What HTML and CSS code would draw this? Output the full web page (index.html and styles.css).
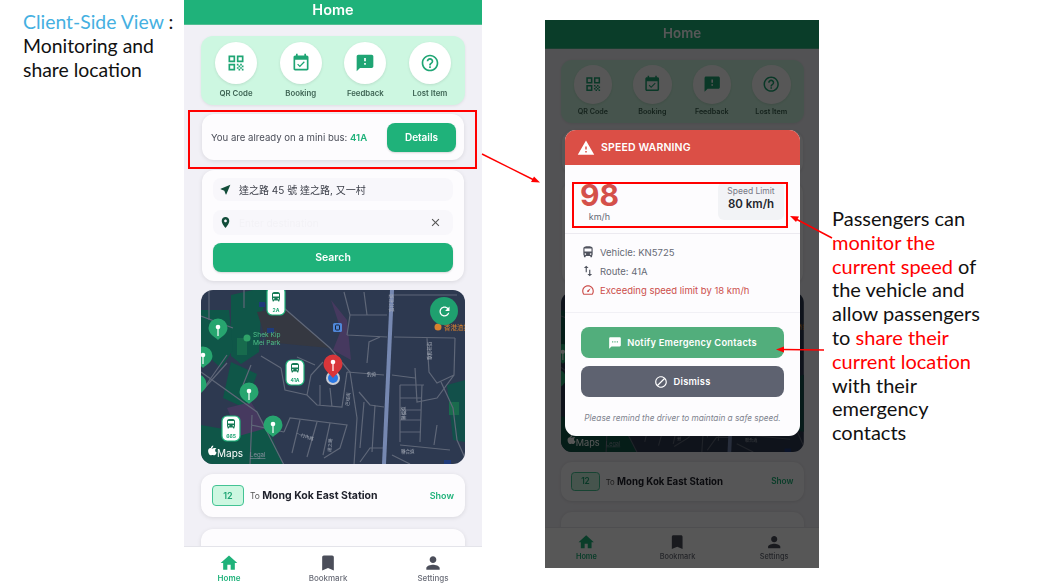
FILE: index.html
```html
<!DOCTYPE html>
<html lang="en">
<head>
  <meta charset="UTF-8" />
  <title>Client-Side View</title>
  <link rel="stylesheet" href="styles.css">
</head>
<body>

  <svg class="sprite" xmlns="http://www.w3.org/2000/svg">
    <symbol id="i-event" viewBox="0 0 24 24"><path d="M16.53 11.06L15.47 10l-4.88 4.88-2.12-2.12-1.06 1.06L10.59 17l5.94-5.94zM19 3h-1V1h-2v2H8V1H6v2H5c-1.11 0-1.99.9-1.99 2L3 19c0 1.1.89 2 2 2h14c1.1 0 2-.9 2-2V5c0-1.1-.9-2-2-2zm0 16H5V8h14v11z"/></symbol>
    <symbol id="i-qr" viewBox="0 0 24 24"><path d="M3 3h8v8H3V3zm2 2v4h4V5H5zm8-2h8v8h-8V3zm2 2v4h4V5h-4zM3 13h8v8H3v-8zm2 2v4h4v-4H5z"/><path d="M13 13h2v2h-2zM17 13h2v2h-2zM15 15h2v2h-2zM19 15h2v2h-2zM13 17h2v2h-2zM17 17h2v2h-2zM15 19h2v2h-2zM19 19h2v2h-2z"/></symbol>
    <symbol id="i-feedback" viewBox="0 0 24 24"><path d="M20 2H4c-1.1 0-1.99.9-1.99 2L2 22l4-4h14c1.1 0 2-.9 2-2V4c0-1.1-.9-2-2-2zm-7 12h-2v-2h2v2zm0-4h-2V6h2v4z"/></symbol>
    <symbol id="i-help" viewBox="0 0 24 24"><path d="M11 18h2v-2h-2v2zm1-16C6.48 2 2 6.48 2 12s4.48 10 10 10 10-4.48 10-10S17.52 2 12 2zm0 18c-4.41 0-8-3.59-8-8s3.59-8 8-8 8 3.59 8 8-3.59 8-8 8zm0-14c-2.21 0-4 1.79-4 4h2c0-1.1.9-2 2-2s2 .9 2 2c0 2-3 1.75-3 5h2c0-2.25 3-2.5 3-5 0-2.21-1.79-4-4-4z"/></symbol>
    <symbol id="i-near" viewBox="0 0 24 24"><path d="M21 3L3 10.53v.98l6.84 2.65L12.48 21h.98L21 3z"/></symbol>
    <symbol id="i-place" viewBox="0 0 24 24"><path d="M12 2C8.13 2 5 5.13 5 9c0 5.25 7 13 7 13s7-7.75 7-13c0-3.87-3.13-7-7-7zm0 9.5c-1.38 0-2.5-1.12-2.5-2.5s1.12-2.5 2.5-2.5 2.5 1.12 2.5 2.5-1.12 2.5-2.5 2.5z"/></symbol>
    <symbol id="i-close" viewBox="0 0 24 24"><path d="M19 6.41L17.59 5 12 10.59 6.41 5 5 6.41 10.59 12 5 17.59 6.41 19 12 13.41 17.59 19 19 17.59 13.41 12z"/></symbol>
    <symbol id="i-home" viewBox="0 0 24 24"><path d="M10 20v-6h4v6h5v-8h3L12 3 2 12h3v8z"/></symbol>
    <symbol id="i-bookmark" viewBox="0 0 24 24"><path d="M17 3H7c-1.1 0-1.99.9-1.99 2L5 21l7-3 7 3V5c0-1.1-.9-2-2-2z"/></symbol>
    <symbol id="i-person" viewBox="0 0 24 24"><path d="M12 12c2.21 0 4-1.79 4-4s-1.79-4-4-4-4 1.79-4 4 1.79 4 4 4zm0 2c-2.67 0-8 1.34-8 4v2h16v-2c0-2.66-5.33-4-8-4z"/></symbol>
    <symbol id="i-refresh" viewBox="0 0 24 24"><path d="M17.65 6.35C16.2 4.9 14.21 4 12 4c-4.42 0-7.99 3.58-7.99 8s3.57 8 7.99 8c3.73 0 6.84-2.55 7.73-6h-2.08c-.82 2.33-3.04 4-5.65 4-3.31 0-6-2.69-6-6s2.69-6 6-6c1.66 0 3.14.69 4.22 1.78L13 11h7V4l-2.35 2.35z"/></symbol>
    <symbol id="i-warning" viewBox="0 0 24 24"><path d="M1 21h22L12 2 1 21zm12-3h-2v-2h2v2zm0-4h-2v-4h2v4z"/></symbol>
    <symbol id="i-bus" viewBox="0 0 24 24"><path d="M4 16c0 .88.39 1.67 1 2.22V20c0 .55.45 1 1 1h1c.55 0 1-.45 1-1v-1h8v1c0 .55.45 1 1 1h1c.55 0 1-.45 1-1v-1.78c.61-.55 1-1.34 1-2.22V6c0-3.5-3.58-4-8-4s-8 .5-8 4v10zm3.5 1c-.83 0-1.5-.67-1.5-1.5S6.67 14 7.5 14s1.5.67 1.5 1.5S8.33 17 7.5 17zm9 0c-.83 0-1.5-.67-1.5-1.5s.67-1.5 1.5-1.5 1.5.67 1.5 1.5-.67 1.5-1.5 1.5zm1.5-6H6V6h12v5z"/></symbol>
    <symbol id="i-swap" viewBox="0 0 24 24"><path d="M16 17.01V10h-2v7.01h-3L15 21l4-3.99h-3zM9 3L5 6.99h3V14h2V6.99h3L9 3z"/></symbol>
    <symbol id="i-gauge" viewBox="0 0 24 24"><path d="M12 4C6.5 4 2 8.5 2 14c0 2.2.7 4.2 1.9 5.9.2.3.5.4.8.4h14.6c.3 0 .6-.1.8-.4C21.3 18.200 22 16.200 22 14c0-5.500-4.500-10-10-10zm6.800 14.300H5.200C4.400 17.100 4 15.600 4 14c0-4.400 3.600-8 8-8s8 3.600 8 8c0 1.600-.4 3.100-1.200 4.300z"/><path d="M16.500 9.200l-4.900 3.300c-.9.300-1.400 1.200-1.100 2 .3.900 1.200 1.300 2 1.100.5-.2.900-.6 1.100-1.100l2.900-5.300z"/></symbol>
    <symbol id="i-sms" viewBox="0 0 24 24"><path d="M20 2H4c-1.100 0-1.990.9-1.990 2L2 22l4-4h14c1.100 0 2-.9 2-2V4c0-1.100-.9-2-2-2zM9 11H7V9h2v2zm4 0h-2V9h2v2zm4 0h-2V9h2v2z"/></symbol>
    <symbol id="i-block" viewBox="0 0 24 24"><path d="M12 2C6.480 2 2 6.480 2 12s4.480 10 10 10 10-4.480 10-10S17.520 2 12 2zM4 12c0-4.420 3.580-8 8-8 1.850 0 3.550.63 4.900 1.690L5.690 16.900C4.630 15.550 4 13.850 4 12zm8 8c-1.850 0-3.550-.63-4.900-1.690L18.310 7.100C19.370 8.450 20 10.150 20 12c0 4.420-3.580 8-8 8z"/></symbol>

    <g id="pin-green">
      <path d="M0 9 C-3 6 -9.500 3 -9.500 -3 A9.500 9.500 0 0 1 9.500 -3 C9.500 3 3 6 0 9z" fill="#27a56f"/>
      <circle cx="0" cy="-4" r="2.300" fill="#fff"/>
      <rect x="-.6" y="-4" width="1.200" height="9" fill="#fff"/>
    </g>

    <symbol id="map-art" viewBox="0 0 264 174">
      <rect width="264" height="174" fill="#2d3950"/>
      <path d="M30 5 L52 0 H70 L60 24 L58 62 L40 74 L30 66z" fill="#0f5648"/>
      <path d="M0 20 H28 L32 60 L20 78 L0 60z" fill="#0f5648"/>
      <path d="M0 135 L28 140 L66 135 L82 174 H0z" fill="#0f5648"/>
      <path d="M30 72 L56 84 L44 118 L22 108z" fill="#0f5648"/>
      <path d="M36 48 H46 V65 H36z" fill="#176b4d"/>
      <path d="M246 95 L264 90 V152 L252 150z" fill="#12504a"/>
      <path d="M248 112 H258 V125 H248z" fill="#1a6b4d"/>
      <path d="M56 22 L83 18 L129 58 L96 55 L66 52z" fill="#353841"/>
      <path d="M130 10 L146 30 L150 70 L132 60 L140 40z" fill="#46395f"/>
      <path d="M26 118 L50 112 L66 138 L38 146z" fill="#46395f"/>
      <path d="M58 12 H64 V17 H58z M66 38 H73 V43 H66z" fill="#1f3a7a"/>
      <path d="M243 170 H250 V174 H243z" fill="#1f3a7a"/>
      <g fill="none" stroke="#5f6778" stroke-width="1.200">
        <path d="M0 26 L32 38 M0 82 L56 122 L83 175 M0 102 L26 73 M26 65 L3 98"/>
        <path d="M43 0 V18 M8 0 V30 M51 125 L49 175 M50 135 L83 142"/>
        <path d="M83 18 L129 58 L149 82 L156 128 L153 175"/>
        <path d="M143 2 L149 25 H186 M146 45 L186 47 M149 25 L146 45 M163 2 L166 25"/>
        <path d="M193 5 H256 M193 47 L254 48 M254 48 L253 85 L236 108 L216 112 L214 78 M226 48 L228 82 L236 93 L253 85 M191 85 L214 88"/>
        <path d="M199 95 H223 M199 95 V152 M221 95 L219 152 M199 108 H220 M199 120 H220 M199 130 H220 M199 142 H220 M199 155 L249 160 M236 135 L233 155 M191 165 L209 174"/>
        <path d="M179 47 L168 52 L166 73 M146 82 L183 85 M158 102 L169 115 L183 117 M174 115 L171 162 M163 112 L159 158 M159 172 L169 158 L183 158"/>
        <path d="M60 66 L80 78 M50 75 L42 95 M96 67 L114 75 M80 78 L84 100 L106 105 L116 115 L141 117 L146 82 M119 95 V115 M129 98 L131 117 M106 105 L110 85 L122 72"/>
        <path d="M83 142 L89 128 L146 135 L139 158 L123 168 M99 130 L91 163 M116 132 L106 167 M129 133 L122 165"/>
        <path d="M240 92 L252 118 L256 150 L264 168"/>
      </g>
      <path d="M191 0 L183 174" fill="none" stroke="#7688b1" stroke-width="4"/>
      <rect x="132" y="33" width="9" height="9" rx="1.500" fill="#4f86d8"/>
      <rect x="134.500" y="35" width="4" height="5" rx="1" fill="none" stroke="#18233a"/>
      <circle cx="46" cy="48" r="3.500" fill="#2fa268"/>
      <text class="map-park" x="52" y="47">Shek Kip</text>
      <text class="map-park" x="52" y="55">Mei Park</text>
      <circle cx="237" cy="37" r="3.500" fill="#d8812f"/>
      <text class="map-poi" x="243" y="40">香港渣打</text>
      <text class="map-road" x="166" y="86">釣道</text>
      <text class="map-road" transform="translate(192 22) rotate(-90)">窩打老道</text>
      <text class="map-road" transform="translate(148 116) rotate(-85)">巴域街</text>
      <text class="map-road" transform="translate(95 145) rotate(18)">一村內路</text>
      <text class="map-road" transform="translate(130 162) rotate(-85)">達之路</text>
      <text class="map-road" transform="translate(230 70) rotate(-90)">歌和老街</text>
      <text class="map-road" transform="translate(204 130) rotate(-90)">聯福道</text>
      <text class="map-road" x="200" y="163">聯合道</text>
      <use href="#pin-green" x="17" y="41"/>
      <use href="#pin-green" x="2" y="69"/>
      <use href="#pin-green" x="-4" y="97"/>
      <use href="#pin-green" x="48" y="105"/>
      <use href="#pin-green" x="72" y="138"/>
      <circle cx="132" cy="88" r="7" fill="#c9ccd4"/>
      <circle cx="132" cy="88" r="5" fill="#2b78e4"/>
      <path d="M132 88 C129 84 122.500 80 122.500 74 A9.500 9.500 0 0 1 141.500 74 C141.500 80 135 84 132 88z" fill="#d9363a"/>
      <circle cx="132" cy="72" r="2.300" fill="#fff"/>
      <rect x="131.400" y="72" width="1.200" height="9" fill="#fff"/>
      <g>
        <rect x="66" y="-3" width="18" height="28" rx="5" fill="#fff" stroke="#1fb27a" stroke-width="1.200"/>
        <use href="#i-bus" x="69" y="1" width="12" height="12" fill="#157a55"/>
        <text class="map-bus" x="75" y="22">2A</text>
      </g>
      <g>
        <rect x="85" y="70" width="18" height="25" rx="5" fill="#fff" stroke="#1fb27a" stroke-width="1.200"/>
        <use href="#i-bus" x="88" y="72" width="12" height="12" fill="#157a55"/>
        <text class="map-bus" x="94" y="92">41A</text>
      </g>
      <g>
        <rect x="21" y="126" width="18" height="25" rx="5" fill="#fff" stroke="#1fb27a" stroke-width="1.200"/>
        <use href="#i-bus" x="24" y="128" width="12" height="12" fill="#157a55"/>
        <text class="map-bus" x="30" y="148">665</text>
      </g>
      <path d="M13.500 158c-.9 0-1.300.5-2 .5s-1.200-.5-2-.5c-1.200 0-2.400 1-2.400 2.900 0 2 1.400 4.400 2.500 4.400.7 0 1-.4 1.900-.4s1.100.4 1.900.4c1 0 2-1.700 2.300-2.700-2-.8-2.100-3.400-.2-4.600zM11.600 157.500c.5-.6.800-1.300.7-2-.7.100-1.400.5-1.800 1-.4.500-.7 1.200-.6 1.900.7 0 1.300-.4 1.700-.9z" fill="#fff"/>
      <text class="map-logo" x="16" y="167">Maps</text>
      <text class="map-legal" x="49" y="167">Legal</text>
    </symbol>
  </svg>

  <main class="slide">

    <p class="note note-left"><span class="note-blue">Client-Side View</span> :<br>Monitoring and<br>share location</p>

    <section class="shot shot-live">
      <div class="phone">
        <header class="app-bar">Home</header>
        <div class="app-body">
          <div class="quick-panel">
            <div class="quick-item"><span class="quick-circle"><svg class="icon"><use href="#i-qr"/></svg></span>QR Code</div>
            <div class="quick-item"><span class="quick-circle"><svg class="icon"><use href="#i-event"/></svg></span>Booking</div>
            <div class="quick-item"><span class="quick-circle"><svg class="icon"><use href="#i-feedback"/></svg></span>Feedback</div>
            <div class="quick-item"><span class="quick-circle"><svg class="icon"><use href="#i-help"/></svg></span>Lost Item</div>
          </div>
          <div class="card status-card">
            <span>You are already on a mini bus: <b class="green">41A</b></span>
            <span class="btn btn-details">Details</span>
          </div>
          <div class="card search-card">
            <div class="field field-from"><svg class="field-icon"><use href="#i-near"/></svg>達之路 45 號 達之路, 又一村</div>
            <div class="field field-to"><svg class="field-icon"><use href="#i-place"/></svg><span class="placeholder">Enter destination</span><svg class="field-close"><use href="#i-close"/></svg></div>
            <div class="btn btn-search">Search</div>
          </div>
          <div class="map-box">
            <svg class="map-svg"><use href="#map-art"/></svg>
            <span class="map-refresh"><svg class="icon-refresh"><use href="#i-refresh"/></svg></span>
          </div>
          <div class="card route-card">
            <span class="route-no">12</span>
            <span class="route-to">To <b>Mong Kok East Station</b></span>
            <span class="route-show">Show</span>
          </div>
          <div class="card route-card"></div>
        </div>
        <nav class="tab-bar">
          <div class="tab tab-on"><svg class="tab-icon"><use href="#i-home"/></svg>Home</div>
          <div class="tab tab-mid"><svg class="tab-icon"><use href="#i-bookmark"/></svg>Bookmark</div>
          <div class="tab"><svg class="tab-icon"><use href="#i-person"/></svg>Settings</div>
        </nav>
      </div>
    </section>

    <section class="shot shot-dim">
      <div class="phone">
        <header class="app-bar">Home</header>
        <div class="app-body">
          <div class="quick-panel">
            <div class="quick-item"><span class="quick-circle"><svg class="icon"><use href="#i-qr"/></svg></span>QR Code</div>
            <div class="quick-item"><span class="quick-circle"><svg class="icon"><use href="#i-event"/></svg></span>Booking</div>
            <div class="quick-item"><span class="quick-circle"><svg class="icon"><use href="#i-feedback"/></svg></span>Feedback</div>
            <div class="quick-item"><span class="quick-circle"><svg class="icon"><use href="#i-help"/></svg></span>Lost Item</div>
          </div>
          <div class="card status-card"></div>
          <div class="card search-card"></div>
          <div class="map-box">
            <svg class="map-svg"><use href="#map-art"/></svg>
          </div>
          <div class="card route-card">
            <span class="route-no">12</span>
            <span class="route-to">To <b>Mong Kok East Station</b></span>
            <span class="route-show">Show</span>
          </div>
          <div class="card route-card"></div>
        </div>
        <nav class="tab-bar">
          <div class="tab tab-on"><svg class="tab-icon"><use href="#i-home"/></svg>Home</div>
          <div class="tab tab-mid"><svg class="tab-icon"><use href="#i-bookmark"/></svg>Bookmark</div>
          <div class="tab"><svg class="tab-icon"><use href="#i-person"/></svg>Settings</div>
        </nav>
      </div>
      <div class="scrim"></div>
      <div class="modal">
        <div class="modal-head"><svg class="modal-warn"><use href="#i-warning"/></svg>SPEED WARNING</div>
        <div class="speed-row">
          <div class="speed-now">
            <span class="speed-value">98</span>
            <span class="speed-unit">km/h</span>
          </div>
          <div class="speed-limit">
            <span class="speed-limit-label">Speed Limit</span>
            <b class="speed-limit-value">80 km/h</b>
          </div>
        </div>
        <div class="modal-info">
          <div class="info-row"><svg class="info-icon"><use href="#i-bus"/></svg>Vehicle: KN5725</div>
          <div class="info-row"><svg class="info-icon"><use href="#i-swap"/></svg>Route: 41A</div>
          <div class="info-row info-alert"><svg class="info-icon"><use href="#i-gauge"/></svg>Exceeding speed limit by 18 km/h</div>
        </div>
        <div class="modal-actions">
          <div class="action action-notify"><svg class="action-icon"><use href="#i-sms"/></svg>Notify Emergency Contacts</div>
          <div class="action action-dismiss"><svg class="action-icon"><use href="#i-block"/></svg>Dismiss</div>
          <p class="modal-note">Please remind the driver to maintain a safe speed.</p>
        </div>
      </div>
    </section>

    <p class="note note-right">Passengers can<br><span class="note-red">monitor the</span><br><span class="note-red">current speed</span> of<br>the vehicle and<br>allow passengers<br>to <span class="note-red">share their</span><br><span class="note-red">current location</span><br>with their<br>emergency<br>contacts</p>

    <div class="mark mark-status"></div>
    <div class="mark mark-speed"></div>

    <svg class="arrows" viewBox="0 0 1049 588">
      <g stroke="#f00" stroke-width="1.500" fill="#f00">
        <line x1="482" y1="154" x2="534" y2="180"/>
        <path d="M540 182.500 L531 182 L534 176.500z" stroke="none"/>
        <line x1="832" y1="238" x2="796" y2="219"/>
        <path d="M790 216 L799 216.500 L796 222z" stroke="none"/>
        <line x1="824" y1="350" x2="782" y2="349.500"/>
        <path d="M776 349.500 L784 346.500 V352.500z" stroke="none"/>
      </g>
    </svg>

  </main>

</body>
</html>
```

FILE: styles.css
```css
* {
  box-sizing: border-box;
}

html, body {
  margin: 0;
  padding: 0;
  background-color: #fff;
}

.sprite {
  display: none;
}

.slide {
  position: relative;
  width: 1049px;
  height: 588px;
  overflow: hidden;
  font-family: Lato, "Noto Sans", Arial, sans-serif;
}

/* slide notes */
.note {
  position: absolute;
  margin: 0;
  font-size: 19.4px;
  line-height: 23.8px;
  color: #111;
}

.note-left {
  left: 23px;
  top: 10px;
  width: 160px;
}

.note-right {
  left: 832px;
  top: 207px;
  width: 180px;
  font-size: 20px;
}

.note-blue {
  color: #45b0e1;
}

.note-red {
  color: #f00;
}

/* phone shots */
.shot {
  position: absolute;
  overflow: hidden;
}

.shot-live {
  left: 184px;
  top: 0;
  width: 298px;
  height: 588px;
}

.shot-dim {
  left: 545px;
  top: 20px;
  width: 274px;
  height: 548px;
}

.phone {
  display: flex;
  flex-direction: column;
  width: 298px;
  height: 588px;
  background-color: #f1f0f6;
  font-family: Inter, "Noto Sans CJK TC", Arial, sans-serif;
  color: #20222c;
  filter: blur(0.4px);
}

.shot-dim .phone {
  zoom: 0.92;
  height: 596px;
}

.app-bar {
  flex: none;
  height: 25px;
  background-color: #1fb27a;
  border-bottom: 1px solid #53bd93;
  color: #fff;
  font-size: 14.5px;
  font-weight: 600;
  line-height: 20px;
  text-align: center;
}

.shot-dim .app-bar {
  height: 31px;
  line-height: 30px;
}

.app-body {
  flex: 1;
  min-height: 0;
  overflow: hidden;
  display: flex;
  flex-direction: column;
  padding: 11px 17px 0;
}

.shot-dim .app-body {
  padding-top: 12px;
}

.shot-dim .status-card {
  height: 46px;
}

.shot-dim .search-card {
  height: 111px;
  margin-top: 9px;
}

.shot-dim .tab-bar {
  height: 45px;
}

.quick-panel {
  flex: none;
  display: flex;
  justify-content: space-between;
  height: 69px;
  padding: 6px 14px 0;
  background-color: #cdf7e1;
  border-radius: 12px;
  box-shadow: 0 1px 3px rgba(0, 0, 0, 0.08);
}

.quick-item {
  display: flex;
  flex-direction: column;
  align-items: center;
  width: 42px;
  font-size: 7.8px;
  font-weight: 600;
  color: #3d6353;
  white-space: nowrap;
}

.quick-circle {
  display: flex;
  align-items: center;
  justify-content: center;
  width: 42px;
  height: 42px;
  margin-bottom: 4px;
  background-color: #fff;
  border-radius: 50%;
  box-shadow: 0 1px 3px rgba(0, 0, 0, 0.1);
}

.icon {
  width: 20px;
  height: 20px;
  fill: #1fa574;
}

.card {
  flex: none;
  background-color: #fdfcfe;
  border-radius: 12px;
  box-shadow: 0 1px 4px rgba(0, 0, 0, 0.1);
  margin-left: 1px;
  margin-right: 1px;
}

.status-card {
  display: flex;
  align-items: center;
  justify-content: space-between;
  height: 46px;
  margin-top: 9px;
  padding: 0 8px 0 9px;
  font-size: 9.6px;
  color: #4a4d58;
}

.green {
  color: #1fb27a;
  font-weight: 600;
}

.btn {
  display: flex;
  align-items: center;
  justify-content: center;
  background-color: #1fb27a;
  color: #fff;
  font-weight: 600;
  border-radius: 8px;
  box-shadow: 0 1px 2px rgba(0, 0, 0, 0.15);
}

.btn-details {
  width: 69px;
  height: 29px;
  font-size: 10px;
}

.search-card {
  height: 111px;
  margin-top: 10px;
  padding: 8px 11px;
}

.field {
  display: flex;
  align-items: center;
  background-color: #f8f7fb;
  border-radius: 8px;
  font-size: 10px;
  color: #3a3d47;
}

.field-from {
  height: 23px;
}

.field-to {
  height: 25px;
  margin-top: 9px;
}

.field-icon {
  flex: none;
  width: 13px;
  height: 13px;
  margin: 0 7px 0 6px;
  fill: #124d3a;
}

.placeholder {
  flex: 1;
  color: #f3f2f6;
}

.field-close {
  width: 13px;
  height: 13px;
  margin-right: 11px;
  fill: #555;
}

.btn-search {
  height: 29px;
  margin-top: 8px;
  font-size: 10.5px;
}

.map-box {
  position: relative;
  flex: none;
  height: 174px;
  margin-top: 9px;
  border-radius: 12px;
  overflow: hidden;
}

.map-svg {
  display: block;
  width: 100%;
  height: 100%;
}

.map-refresh {
  position: absolute;
  top: 7px;
  right: 7px;
  display: flex;
  align-items: center;
  justify-content: center;
  width: 28px;
  height: 28px;
  background-color: #1fa06f;
  border-radius: 50%;
}

.icon-refresh {
  width: 15px;
  height: 15px;
  fill: #fff;
}

.map-park {
  font-size: 6.6px;
  fill: #4fc088;
}

.map-poi {
  font-size: 6.5px;
  fill: #d8812f;
}

.map-road {
  font-size: 4.5px;
  fill: #a7adb8;
}

.map-bus {
  font-size: 5px;
  font-weight: 700;
  fill: #1fa574;
  text-anchor: middle;
}

.map-logo {
  font-size: 10px;
  fill: #fff;
}

.map-legal {
  font-size: 6px;
  fill: #8b92a0;
  text-decoration: underline;
}

.route-card {
  display: flex;
  align-items: center;
  height: 43px;
  margin: 10px 0 0;
  padding: 0 11px;
  font-size: 10.5px;
}

.route-no {
  display: flex;
  align-items: center;
  justify-content: center;
  width: 32px;
  height: 21px;
  margin-right: 6px;
  background-color: #cdf7e1;
  border: 1px solid #43c394;
  border-radius: 4px;
  color: #1fa574;
  font-size: 9px;
  font-weight: 600;
}

.route-to {
  flex: 1;
  font-size: 8.5px;
  color: #555;
}

.route-to b {
  font-size: 10.5px;
  font-weight: 700;
  color: #20222c;
}

.route-show {
  font-size: 9px;
  font-weight: 600;
  color: #1fb27a;
}

.route-card + .route-card {
  margin-top: 12px;
}

.tab-bar {
  flex: none;
  display: flex;
  justify-content: space-between;
  height: 42px;
  padding: 6px 24px 0 20px;
  background-color: #fff;
  border-top: 1px solid #e4e4ea;
}

.tab {
  display: flex;
  flex-direction: column;
  align-items: center;
  width: 50px;
  font-size: 8px;
  line-height: 10px;
  font-weight: 500;
  color: #6a6d78;
}

.tab-mid {
  margin-right: 6px;
}

.tab-on {
  color: #1fb27a;
  font-weight: 600;
}

.tab-icon {
  width: 20px;
  height: 20px;
  fill: #4b4e5a;
}

.tab-on .tab-icon {
  fill: #1fb27a;
}

/* speed warning dialog */
.scrim {
  position: absolute;
  inset: 0;
  background-color: rgba(0, 0, 0, 0.66);
}

.modal {
  position: absolute;
  left: 20px;
  top: 110px;
  width: 235px;
  height: 306px;
  background-color: #fdfcfe;
  border-radius: 11px;
  overflow: hidden;
  font-family: Inter, Arial, sans-serif;
}

.modal-head {
  display: flex;
  align-items: center;
  height: 35px;
  padding-left: 12px;
  background-color: #db4f46;
  color: #fff;
  font-size: 10.5px;
  font-weight: 600;
  letter-spacing: 0.15px;
}

.modal-warn {
  width: 18px;
  height: 18px;
  margin-right: 6px;
  fill: #fff;
}

.speed-row {
  display: flex;
  justify-content: space-between;
  height: 69px;
  padding: 13px 16px 0;
  border-bottom: 1px solid #eceaf0;
}

.speed-now {
  display: flex;
  flex-direction: column;
  width: 37px;
  align-items: center;
}

.speed-value {
  font-size: 30px;
  font-weight: 700;
  line-height: 34px;
  color: #d4504a;
}

.speed-unit {
  font-size: 9px;
  line-height: 10px;
  color: #666a75;
}

.speed-limit {
  display: flex;
  flex-direction: column;
  align-items: center;
  width: 66px;
  height: 38px;
  margin-top: 4px;
  padding-top: 4px;
  background-color: #f2f3f6;
  border-radius: 6px;
}

.speed-limit-label {
  font-size: 8.5px;
  color: #767986;
}

.speed-limit-value {
  margin-top: 1px;
  font-size: 11.5px;
  font-weight: 600;
  color: #24262e;
}

.modal-info {
  display: flex;
  flex-direction: column;
  gap: 7px;
  height: 79px;
  padding: 12px 16px 0;
  border-bottom: 1px solid #f1f0f5;
}

.info-row {
  display: flex;
  align-items: center;
  height: 12px;
  font-size: 9.5px;
  color: #666a75;
}

.info-icon {
  flex: none;
  width: 14px;
  height: 14px;
  margin-right: 5px;
  fill: #50535e;
}

.info-alert {
  color: #cc4f4c;
}

.info-alert .info-icon {
  fill: #cc4f4c;
}

.modal-actions {
  display: flex;
  flex-direction: column;
  padding: 14px 16px 0;
}

.action {
  display: flex;
  align-items: center;
  justify-content: center;
  height: 31px;
  border-radius: 8px;
  color: #fff;
  font-size: 9.3px;
  font-weight: 600;
  letter-spacing: 0.25px;
}

.action-notify {
  background-color: #52ae7c;
}

.action-dismiss {
  margin-top: 8px;
  background-color: #5e6270;
}

.action-icon {
  width: 14px;
  height: 14px;
  margin-right: 5px;
  fill: #fff;
}

.modal-note {
  margin: 16px 0 0;
  font-size: 8.25px;
  font-style: italic;
  text-align: center;
  color: #80838e;
  white-space: nowrap;
}

/* annotation marks */
.mark {
  position: absolute;
  border: 2px solid #f00;
}

.mark-status {
  left: 188px;
  top: 110px;
  width: 289px;
  height: 59px;
}

.mark-speed {
  left: 572px;
  top: 182px;
  width: 216px;
  height: 46px;
}

.arrows {
  position: absolute;
  left: 0;
  top: 0;
  width: 1049px;
  height: 588px;
}
```
